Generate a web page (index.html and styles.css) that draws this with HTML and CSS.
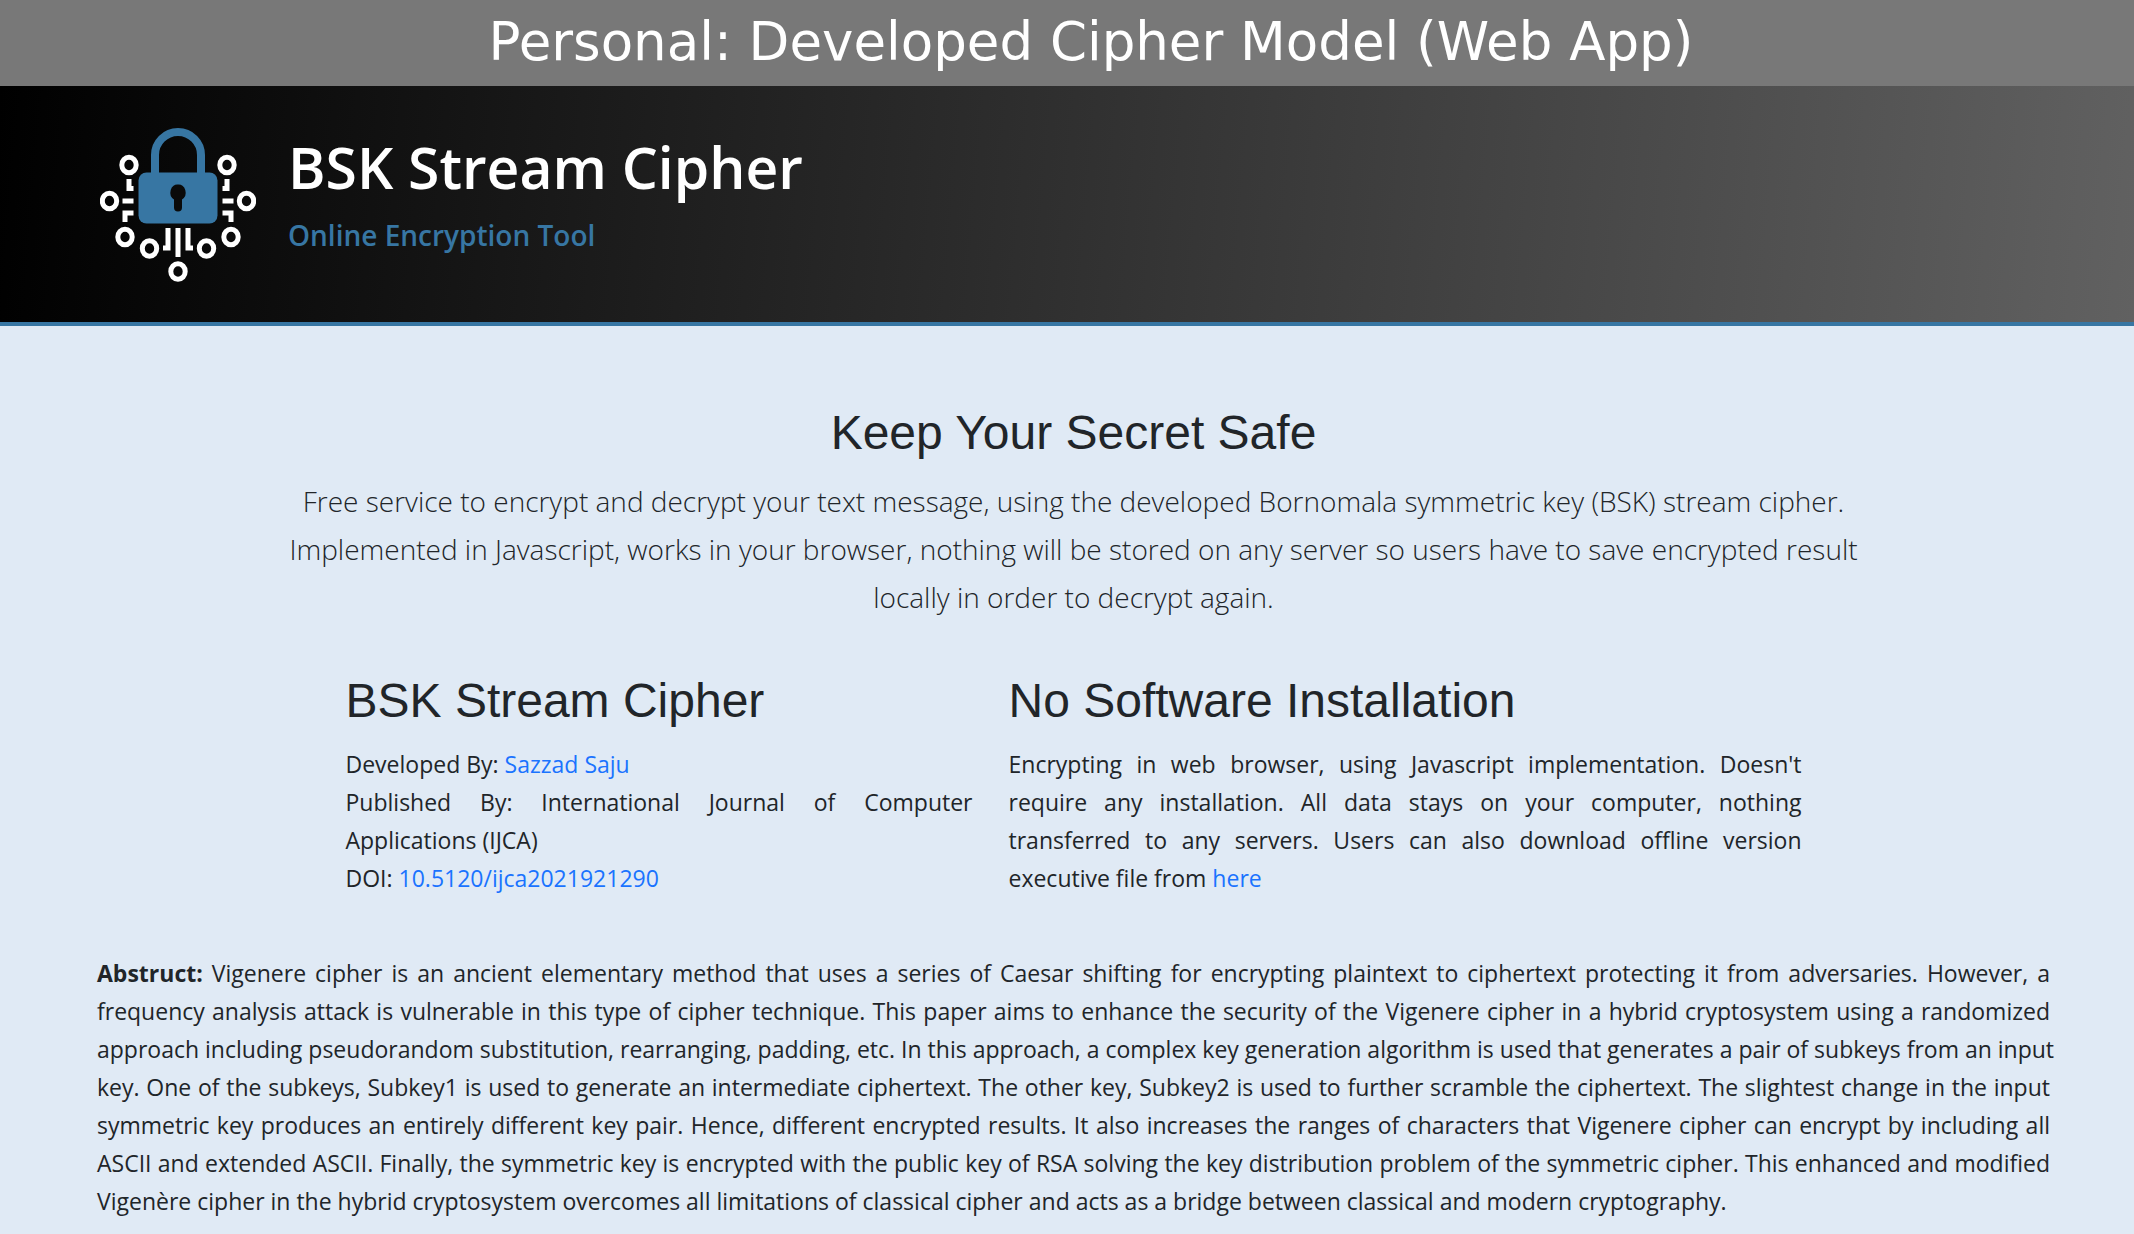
FILE: index.html
```html
<!DOCTYPE html>
<html lang="en">
<head>
<meta charset="utf-8">
<title>BSK Stream Cipher</title>
<link rel="stylesheet" href="styles.css">
</head>
<body>
<div class="caption">Personal: Developed Cipher Model (Web App)</div>
<header class="banner">
  <svg class="logo" viewBox="0 0 156 154" aria-hidden="true">
    <path d="M55 50V27a23 23 0 0 1 46 0v23" fill="none" stroke="#3776a3" stroke-width="8"/>
    <rect x="38.500" y="44.500" width="79" height="51" rx="8" fill="#3776a3"/>
    <path d="M78 56.500a6.800 8 0 0 1 4 15v8a4 4 0 0 1 -8 0v-8a6.800 8 0 0 1 4 -15z" fill="#0a0a0a"/>
    <g fill="none" stroke="#fff" stroke-width="5">
      <ellipse cx="29" cy="37" rx="7.200" ry="7.700"/><ellipse cx="127" cy="37" rx="7.200" ry="7.700"/>
      <ellipse cx="9.500" cy="73" rx="7.200" ry="7.700"/><ellipse cx="146.500" cy="73" rx="7.200" ry="7.700"/>
      <ellipse cx="25" cy="109" rx="7.200" ry="7.700"/><ellipse cx="131" cy="109" rx="7.200" ry="7.700"/>
      <ellipse cx="49.500" cy="120.500" rx="7.200" ry="7.700"/><ellipse cx="106.500" cy="120.500" rx="7.200" ry="7.700"/>
      <ellipse cx="78" cy="143.500" rx="7.200" ry="7.700"/>
      <path d="M29 51v9.500h4.500M127 51v9.500h-4.500M22.500 73h11M133.500 73h-11M25 94v-9h8.500M131 94v-9h-8.500M68 100v20h-5M88 100v20h5M78 100v29"/>
    </g>
  </svg>
  <div class="brand">
    <h1 class="brand-name">BSK Stream Cipher</h1>
    <p class="brand-tag">Online Encryption Tool</p>
  </div>
</header>
<main class="content">
  <section class="intro">
    <h2 class="heading">Keep Your Secret Safe</h2>
    <p class="lead">Free service to encrypt and decrypt your text message, using the developed Bornomala symmetric key (BSK) stream cipher. Implemented in Javascript, works in your browser, nothing will be stored on any server so users have to save encrypted result locally in order to decrypt again.</p>
  </section>
  <div class="columns">
    <section>
      <h2 class="heading">BSK Stream Cipher</h2>
      <p class="text">Developed By: <a href="#author">Sazzad Saju</a><br>Published By: International Journal of Computer Applications (IJCA)<br>DOI: <a href="#doi">10.5120/ijca2021921290</a></p>
    </section>
    <section>
      <h2 class="heading">No Software Installation</h2>
      <p class="text">Encrypting in web browser, using Javascript implementation. Doesn't require any installation. All data stays on your computer, nothing transferred to any servers. Users can also download offline version executive file from <a href="#download">here</a></p>
    </section>
  </div>
  <p class="text abstract">
    <span class="line"><strong>Abstruct:</strong> Vigenere cipher is an ancient elementary method that uses a series of Caesar shifting for encrypting plaintext to ciphertext protecting it from adversaries. However, a</span>
    <span class="line">frequency analysis attack is vulnerable in this type of cipher technique. This paper aims to enhance the security of the Vigenere cipher in a hybrid cryptosystem using a randomized</span>
    <span class="line">approach including pseudorandom substitution, rearranging, padding, etc. In this approach, a complex key generation algorithm is used that generates a pair of subkeys from an input</span>
    <span class="line">key. One of the subkeys, Subkey1 is used to generate an intermediate ciphertext. The other key, Subkey2 is used to further scramble the ciphertext. The slightest change in the input</span>
    <span class="line">symmetric key produces an entirely different key pair. Hence, different encrypted results. It also increases the ranges of characters that Vigenere cipher can encrypt by including all</span>
    <span class="line">ASCII and extended ASCII. Finally, the symmetric key is encrypted with the public key of RSA solving the key distribution problem of the symmetric cipher. This enhanced and modified</span>
    <span class="line">Vigenère cipher in the hybrid cryptosystem overcomes all limitations of classical cipher and acts as a bridge between classical and modern cryptography.</span>
  </p>
</main>
</body>
</html>
```
FILE: styles.css
```css
* { box-sizing: border-box; }
body {
  margin: 0;
  background: #e0eaf5;
  color: #212529;
  font-family: "Open Sans", "Noto Sans", sans-serif;
  font-size: 23px;
  line-height: 38px;
}
h1, h2, p { margin: 0; }
a { color: #1a73ff; text-decoration: none; }
.caption {
  padding: 10px 0 12px 48px;
  background: #787878;
  color: #fff;
  font-family: "DejaVu Sans", sans-serif;
  font-size: 53px;
  line-height: 64px;
  text-align: center;
}
.banner {
  display: flex;
  align-items: flex-start;
  gap: 32px;
  padding: 42px 100px 40px;
  border-bottom: 4px solid #3776a3;
  background: linear-gradient(95deg, #000, #303030 50%, #616161);
}
.logo { width: 156px; height: 154px; flex: none; }
.brand-name {
  color: #fff;
  font-size: 57px;
  font-weight: 600;
  line-height: 78px;
}
.brand-tag {
  margin-top: 10px;
  color: #3776a3;
  font-size: 28px;
  font-weight: 600;
  line-height: 38px;
}
.content { padding: 77px 84px 10px 97px; }
.intro {
  max-width: 1600px;
  margin: 0 auto;
  text-align: center;
}
.heading {
  margin-bottom: 14px;
  font-family: "Liberation Sans", Arial, sans-serif;
  font-size: 48px;
  font-weight: 400;
  line-height: 60px;
}
.lead {
  font-size: 28px;
  font-weight: 300;
  line-height: 48px;
}
.columns {
  display: grid;
  grid-template-columns: 627fr 793fr;
  gap: 36px;
  max-width: 1456px;
  margin: 50px auto 57px;
}
.text { text-align: justify; }
.line {
  display: block;
  text-align-last: justify;
  white-space: nowrap;
}
.line:last-child { text-align-last: left; }
```
